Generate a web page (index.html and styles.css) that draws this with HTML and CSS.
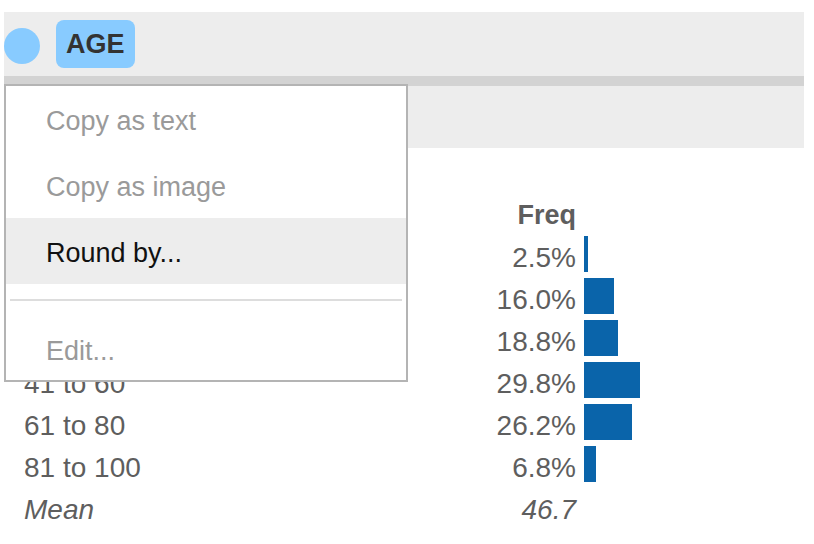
FILE: index.html
```html
<!DOCTYPE html>
<html>
<head>
<meta charset="utf-8">
<link rel="stylesheet" href="styles.css">
</head>
<body>
<div class="page">
  <div class="titlebar">
    <span class="dot"></span>
    <span class="badge">AGE</span>
  </div>
  <div class="strip"></div>
  <div class="subbar"></div>
  <div class="freq-table">
    <div class="cell label head"></div>
    <div class="cell value head">Freq</div>
    <div class="cell bar-cell"></div>

    <div class="cell label"></div>
    <div class="cell value">2.5%</div>
    <div class="cell bar-cell"><span class="bar" style="width:4px"></span></div>

    <div class="cell label"></div>
    <div class="cell value">16.0%</div>
    <div class="cell bar-cell"><span class="bar" style="width:30px"></span></div>

    <div class="cell label"></div>
    <div class="cell value">18.8%</div>
    <div class="cell bar-cell"><span class="bar" style="width:34px"></span></div>

    <div class="cell label">41 to 60</div>
    <div class="cell value">29.8%</div>
    <div class="cell bar-cell"><span class="bar" style="width:56px"></span></div>

    <div class="cell label">61 to 80</div>
    <div class="cell value">26.2%</div>
    <div class="cell bar-cell"><span class="bar" style="width:48px"></span></div>

    <div class="cell label">81 to 100</div>
    <div class="cell value">6.8%</div>
    <div class="cell bar-cell"><span class="bar" style="width:12px"></span></div>

    <div class="cell label italic">Mean</div>
    <div class="cell value italic">46.7</div>
    <div class="cell bar-cell"></div>
  </div>

  <div class="menu">
    <div class="item disabled">Copy as text</div>
    <div class="item disabled">Copy as image</div>
    <div class="item active">Round by...</div>
    <div class="sep"></div>
    <div class="item disabled last">Edit...</div>
  </div>
</div>
</body>
</html>
```
FILE: styles.css
```css
html, body {
  margin: 0;
  padding: 0;
  background: #ffffff;
}

.page {
  position: relative;
  width: 814px;
  height: 544px;
  overflow: hidden;
  font-family: "Liberation Sans", Arial, sans-serif;
}

.titlebar {
  margin: 12px 0 0 4px;
  width: 800px;
  height: 64px;
  background: #ededed;
  display: flex;
  align-items: center;
  gap: 16px;
}

.dot {
  width: 36px;
  height: 36px;
  border-radius: 50%;
  background: #88cbff;
  margin-top: 4px;
}

.badge {
  height: 48px;
  line-height: 48px;
  padding: 0 10px;
  border-radius: 8px;
  background: #88cbff;
  color: #333333;
  font-weight: bold;
  font-size: 27px;
}

.strip {
  margin-left: 4px;
  width: 800px;
  height: 10px;
  background: #d3d3d3;
}

.subbar {
  margin-left: 4px;
  width: 800px;
  height: 62px;
  background: #ededed;
}

.freq-table {
  margin-top: 43px;
  padding-left: 24px;
  display: grid;
  grid-template-columns: 444px 100px 1fr;
  grid-auto-rows: 42px;
  column-gap: 8px;
  font-size: 28px;
  color: #5e5e5e;
}

.cell {
  box-sizing: border-box;
  padding-top: 7px;
  line-height: 35px;
  white-space: nowrap;
}

.value {
  text-align: right;
}

.head {
  font-weight: bold;
  font-size: 27px;
}

.italic {
  font-style: italic;
}

.bar-cell {
  padding-top: 0;
  display: flex;
  align-items: center;
}

.bar {
  display: block;
  height: 36px;
  background: #0a64aa;
}

.menu {
  position: absolute;
  left: 4px;
  top: 84px;
  width: 400px;
  height: 294px;
  border: 2px solid #b4b4b4;
  background: #ffffff;
  display: flex;
  flex-direction: column;
}

.item {
  height: 66px;
  line-height: 70px;
  padding-left: 40px;
  font-size: 27px;
  color: #111111;
}

.item.disabled {
  color: #9a9a9a;
}

.item.active {
  background: #ededed;
}

.item.last {
  height: 64px;
}

.sep {
  height: 32px;
  display: flex;
  align-items: center;
  padding: 0 4px;
}

.sep::before {
  content: "";
  display: block;
  width: 100%;
  height: 2px;
  background: #dddddd;
}
```
